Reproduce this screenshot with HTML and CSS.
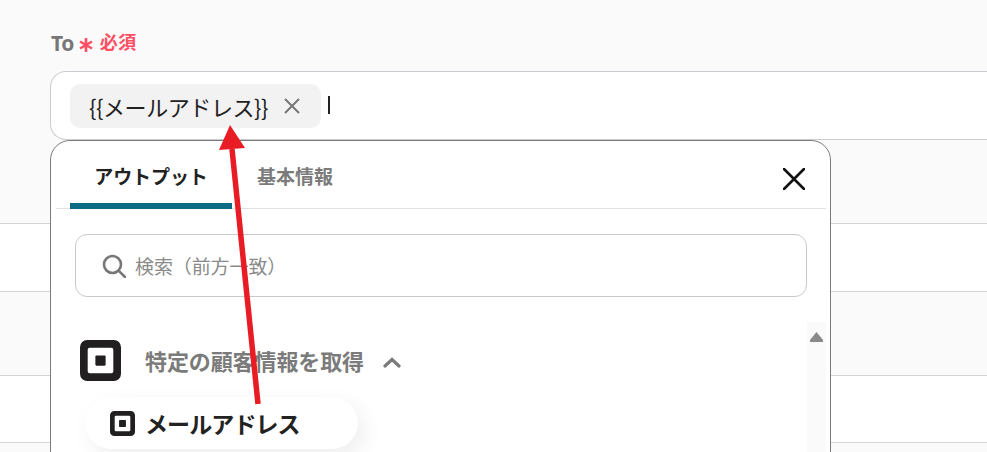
FILE: index.html
```html
<!DOCTYPE html>
<html lang="ja">
<head>
<meta charset="utf-8">
<title>To</title>
<link rel="stylesheet" href="styles.css">
</head>
<body>
<main class="page">
  <div class="form">
    <div class="label"><span class="label-to">To</span><svg class="label-star" viewBox="0 0 16 16" width="16" height="16"><path d="M8 1V15M2 4.500L14 11.500M14 4.500L2 11.500"/></svg><span class="label-req">必須</span></div>
    <div class="field">
      <span class="chip"><span class="chip-text">{{メールアドレス}}</span>
        <svg class="chip-x" viewBox="0 0 16 16" width="16" height="16"><path d="M1 1L15 15M15 1L1 15"/></svg>
      </span>
      <span class="caret"></span>
    </div>
  </div>
  <div class="rows">
    <div class="row row-a"></div>
    <div class="row row-b"></div>
    <div class="row row-c"></div>
    <div class="row row-d"></div>
    <div class="row row-e"></div>
  </div>

  <section class="panel">
    <div class="tabs">
      <div class="tab tab-active">アウトプット</div>
      <div class="tab tab-idle">基本情報</div>
      <svg class="close" viewBox="0 0 22 22" width="22" height="22"><path d="M1 1L21 21M21 1L1 21"/></svg>
    </div>
    <div class="search">
      <svg class="search-icon" viewBox="0 0 24 24" width="24" height="24"><circle cx="10.500" cy="10.500" r="8.500"/><path d="M16.800 16.800L23 23"/></svg>
      <span class="search-text">検索（前方一致）</span>
    </div>
    <div class="group">
      <svg class="square-logo" viewBox="0 0 40 40" width="41" height="41"><path fill-rule="evenodd" d="M7 0h26a7 7 0 0 1 7 7v26a7 7 0 0 1-7 7H7a7 7 0 0 1-7-7V7a7 7 0 0 1 7-7zM9.500 7.500a2 2 0 0 0-2 2v21a2 2 0 0 0 2 2h21a2 2 0 0 0 2-2v-21a2 2 0 0 0-2-2z"/><rect x="15" y="15" width="10" height="10" rx="1"/></svg>
      <span class="group-title">特定の顧客情報を取得</span>
      <svg class="chevron" viewBox="0 0 18 11" width="18" height="11"><path d="M2 9L9 2.500L16 9"/></svg>
    </div>
    <div class="pill-wrap">
      <div class="pill">
        <svg class="pill-logo" viewBox="0 0 40 40" width="25" height="25"><path fill-rule="evenodd" d="M7 0h26a7 7 0 0 1 7 7v26a7 7 0 0 1-7 7H7a7 7 0 0 1-7-7V7a7 7 0 0 1 7-7zM9.500 7.500a2 2 0 0 0-2 2v21a2 2 0 0 0 2 2h21a2 2 0 0 0 2-2v-21a2 2 0 0 0-2-2z"/><rect x="14.500" y="14.500" width="11" height="11" rx="1"/></svg>
        <span class="pill-text">メールアドレス</span>
      </div>
    </div>
    <div class="scrollbar"><span class="scroll-up"></span></div>
  </section>

  <svg class="arrow" viewBox="0 0 60 300" width="60" height="300"><path class="arrow-line" d="M22 29L48 284"/><path class="arrow-head" d="M20 5L9 30L35 28Z"/></svg>
</main>
</body>
</html>
```
FILE: styles.css
```css
* { box-sizing: border-box; }
html, body { margin: 0; padding: 0; }
body {
  width: 987px;
  height: 452px;
  overflow: hidden;
  background: #fafafa;
  font-family: "Noto Sans CJK JP", "Noto Sans", sans-serif;
}
.page { position: relative; width: 987px; height: 452px; overflow: hidden; }
.form { padding: 30px 0 0 50px; height: 140px; }
.label { display: flex; align-items: center; height: 25px; font-weight: 700; }
.label-to { font-size: 21px; color: #777; font-family: "Noto Sans", sans-serif; letter-spacing: -0.5px; margin-left: 1px; }
.label-star { margin: 4px 0 0 4px; fill: none; stroke: #ff4f64; stroke-width: 2.600; }
.label-req { font-size: 18px; color: #ff4f64; margin-left: 6px; line-height: 24px; margin-top: -3px; letter-spacing: 0.4px; }
.field {
  display: flex;
  align-items: center;
  width: 1000px;
  height: 69px;
  margin-top: 16px;
  padding: 1px 0 0 19px;
  background: #fff;
  border: 1px solid #c9cdd2;
  border-right: none;
  border-radius: 16px 0 0 16px;
}
.chip {
  display: flex;
  align-items: center;
  width: 251px;
  height: 44px;
  padding-left: 19px;
  background: #f2f2f3;
  border-radius: 10px;
}
.chip-text { font-size: 22px; color: #222; line-height: 28px; letter-spacing: -0.42px; white-space: nowrap; }
.chip-x { margin-left: 16px; fill: none; stroke: #777; stroke-width: 2; }
.caret { width: 2px; height: 18px; margin: 0 0 3px 7px; background: #222; }
.rows { display: flex; flex-direction: column; }
.row { border-bottom: 1px solid #d3d5d8; }
.row-a { height: 84px; background: #fafafa; }
.row-b { height: 68px; background: #fff; }
.row-c { height: 84px; background: #fafafa; }
.row-d { height: 67px; background: #fff; }
.row-e { height: 20px; background: #fafafa; border-bottom: none; }
.panel {
  position: absolute;
  left: 50px;
  top: 140px;
  width: 781px;
  height: 330px;
  background: #fff;
  border: 1px solid #7b7b7b;
  border-radius: 20px 20px 0 0;
}
.tabs {
  position: relative;
  display: flex;
  height: 68px;
  margin: 0 4px 0 5px;
  border-bottom: 1px solid #e2e2e2;
}
.tab { height: 68px; font-size: 19px; line-height: 70px; font-weight: 700; text-align: center; }
.tab-active { width: 162px; margin-left: 14px; color: #222; border-bottom: 6px solid #0c6a82; border-radius: 6px 6px 0 0; letter-spacing: -0.1px; }
.tab-idle { width: 126px; color: #7b7b7b; }
.close { position: absolute; right: 21px; top: 27px; fill: none; stroke: #111; stroke-width: 2.600; stroke-linecap: round; }
.search {
  display: flex;
  align-items: center;
  height: 63px;
  margin: 25px 23px 0 24px;
  padding-left: 26px;
  border: 1px solid #c9c9c9;
  border-radius: 12px;
}
.search-icon { fill: none; stroke: #777; stroke-width: 2.600; stroke-linecap: round; }
.search-text { margin-left: 9px; font-size: 19px; color: #8a8a8a; letter-spacing: -0.1px; }
.group { display: flex; align-items: center; height: 41px; margin: 43px 0 0 29px; }
.square-logo, .pill-logo { fill: #211f20; }
.group-title { margin: -2px 0 0 24px; font-size: 22px; font-weight: 700; color: #7b7b7b; letter-spacing: -0.100px; }
.chevron { margin: 3px 0 0 19px; fill: none; stroke: #7b7b7b; stroke-width: 3.200; stroke-linecap: round; }
.pill-wrap { margin: 16px 0 0 34px; width: 290px; }
.pill {
  display: flex;
  align-items: center;
  width: 273px;
  height: 52px;
  padding-left: 25px;
  background: #fff;
  border-radius: 26px;
  box-shadow: 6px 8px 22px rgba(0, 0, 0, 0.07);
}
.pill-text { margin-left: 10px; font-size: 23px; font-weight: 700; color: #222; letter-spacing: -0.9px; }
.scrollbar { position: absolute; right: 4px; top: 181px; width: 19px; height: 150px; background: #fafafa; }
.scroll-up {
  position: absolute;
  left: 3px;
  top: 10px;
  width: 13px;
  height: 10px;
  background: #8a8a8a;
  clip-path: polygon(50% 0, 100% 80%, 100% 100%, 0 100%, 0 80%);
}
.arrow { position: absolute; left: 210px; top: 120px; }
.arrow-line { fill: none; stroke: #e81c24; stroke-width: 5.500; }
.arrow-head { fill: #e81c24; }
```
